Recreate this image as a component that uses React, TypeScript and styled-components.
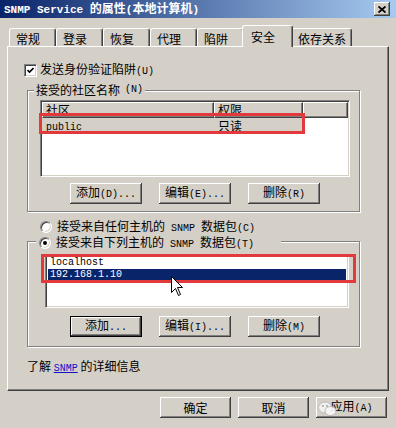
import React from "react";
import styled, { createGlobalStyle } from "styled-components";

const GlobalStyle = createGlobalStyle`
  html, body { margin: 0; padding: 0; background: #d4d0c8; }
  body {
    font-family: "Noto Sans CJK SC", "Liberation Sans", sans-serif;
    font-size: 12px;
    color: #000;
  }
  * { box-sizing: border-box; }
`;

const Window = styled.div`
  position: relative;
  width: 396px;
  height: 428px;
  background: #d4d0c8;
  display: flex;
  flex-direction: column;
  overflow: hidden;
`;

const TitleBar = styled.div`
  height: 18px;
  flex: none;
  display: flex;
  align-items: center;
  justify-content: space-between;
  padding: 0 6px 0 4px;
  background: linear-gradient(to right, #0a246a, #a6caf0);
  color: #fff;
`;

const TitleText = styled.div`
  font-weight: bold;
  font-size: 12px;
  line-height: 18px;
  white-space: nowrap;
`;

const TitleLatin = styled.span`
  font-family: "Liberation Mono", monospace;
  font-size: 11px;
  font-weight: bold;
`;

const CloseButton = styled.div`
  width: 16px;
  height: 14px;
  background: #d4d0c8;
  box-shadow: inset -1px -1px #404040, inset 1px 1px #fff, inset -2px -2px #808080;
  display: flex;
  align-items: center;
  justify-content: center;
`;

const Body = styled.div`
  flex: 1;
  display: flex;
  flex-direction: column;
  padding: 7px 7px 0 7px;
`;

const TabStrip = styled.div`
  position: relative;
  z-index: 1;
  height: 22px;
  margin-bottom: -1px;
  padding-left: 2px;
  display: flex;
  align-items: flex-end;
`;

const Tab = styled.div<{ $active?: boolean }>`
  position: relative;
  z-index: ${(p) => (p.$active ? 2 : 1)};
  min-width: ${(p) => (p.$active ? 51 : 47)}px;
  height: ${(p) => (p.$active ? 22 : 18)}px;
  margin: 0 ${(p) => (p.$active ? -2 : 0)}px ${(p) => (p.$active ? 0 : 1)}px;
  padding: ${(p) => (p.$active ? "1px 7px 0 8px" : "3px 5px 0 6px")};
  display: flex;
  align-items: center;
  background: #d4d0c8;
  border: 1px solid;
  border-color: #fff #404040 transparent #fff;
  border-bottom: none;
  border-radius: 3px 3px 0 0;
  box-shadow: inset -1px 0 #808080;
  line-height: 14px;
  white-space: nowrap;
`;

const Panel = styled.div`
  height: 345px;
  flex: none;
  display: flex;
  flex-direction: column;
  align-items: flex-start;
  border: 1px solid;
  border-color: #fff #404040 #404040 #fff;
  box-shadow: inset -1px -1px #808080;
`;

const Latin = styled.span`
  font-family: "Liberation Mono", monospace;
  font-size: 10px;
`;

const mixed = (s: string) =>
  s
    .split(/([\x20-\x7E]+)/)
    .filter(Boolean)
    .map((part, i) =>
      /^[\x20-\x7E]+$/.test(part) ? (
        <Latin key={i}>{part}</Latin>
      ) : (
        <React.Fragment key={i}>{part}</React.Fragment>
      )
    );

const CheckRow = styled.label`
  display: flex;
  align-items: center;
  gap: 3px;
  height: 13px;
  margin: 17px 0 0 16px;
  line-height: 14px;
  white-space: nowrap;
`;

const CheckBox = styled.span`
  width: 13px;
  height: 13px;
  flex: none;
  background: #fff;
  border: 1px solid;
  border-color: #808080 #fff #fff #808080;
  box-shadow: inset 1px 1px #404040, inset -1px -1px #d4d0c8;
  display: flex;
  align-items: center;
  justify-content: center;
`;

const GroupBox = styled.div<{ $top: number; $width: number; $height: number }>`
  width: ${(p) => p.$width}px;
  height: ${(p) => p.$height}px;
  margin: ${(p) => p.$top}px 0 0 19px;
  display: flex;
  flex-direction: column;
  align-items: flex-start;
  border: 1px solid #808080;
  box-shadow: 1px 1px 0 #fff, inset 1px 1px 0 #fff;
`;

const GroupLabel = styled.div<{ $width?: number; $rise: number }>`
  margin: -${(p) => p.$rise}px 0 0 ${(p) => (p.$width ? 8 : 6)}px;
  padding: 0 ${(p) => (p.$width ? 0 : 2)}px 0 ${(p) => (p.$width ? 3 : 2)}px;
  width: ${(p) => (p.$width ? `${p.$width}px` : "auto")};
  height: 14px;
  line-height: 14px;
  background: #d4d0c8;
  display: flex;
  align-items: center;
  gap: 5px;
  white-space: nowrap;
`;

const Sunken = styled.div<{ $left: number; $top: number; $width: number; $height: number }>`
  position: relative;
  margin: ${(p) => p.$top}px 0 0 ${(p) => p.$left}px;
  width: ${(p) => p.$width}px;
  height: ${(p) => p.$height}px;
  background: #fff;
  border: 1px solid;
  border-color: #808080 #fff #fff #808080;
  padding: 1px;
  box-shadow: inset 1px 1px #404040, inset -1px -1px #d4d0c8;
  display: flex;
  flex-direction: column;
`;

const HeaderRow = styled.div`
  display: flex;
  height: 16px;
  flex: none;
`;

const HeaderCell = styled.div<{ $width?: number }>`
  ${(p) => (p.$width ? `width: ${p.$width}px;` : "flex: 1;")}
  height: 16px;
  padding-left: 3px;
  line-height: 14px;
  background: #d4d0c8;
  border: 1px solid;
  border-color: #fff #404040 #404040 #fff;
  box-shadow: inset -1px -1px #808080;
`;

const DataRow = styled.div`
  display: flex;
  width: 261px;
  height: 15px;
  background: #d4d0c8;
  align-items: center;
`;

const DataCell = styled.div<{ $width: number }>`
  width: ${(p) => p.$width}px;
  padding-left: 4px;
  line-height: 15px;
  white-space: nowrap;
`;

const ListItem = styled.div<{ $selected?: boolean }>`
  height: 12px;
  margin: 0 1px;
  padding-left: 2px;
  line-height: 12px;
  color: ${(p) => (p.$selected ? "#fff" : "#000")};
  background: ${(p) => (p.$selected ? "#0a246a" : "transparent")};
  font-family: "Liberation Mono", monospace;
  font-size: 10px;
`;

const RedMark = styled.div<{ $left: number; $top: number; $width: number; $height: number }>`
  position: absolute;
  left: ${(p) => p.$left}px;
  top: ${(p) => p.$top}px;
  width: ${(p) => p.$width}px;
  height: ${(p) => p.$height}px;
  border: 3px solid #e2393c;
  pointer-events: none;
`;

const ButtonRow = styled.div<{ $top: number }>`
  display: flex;
  gap: 17px;
  margin: ${(p) => p.$top}px 0 0 42px;
`;

const Button = styled.button<{ $focused?: boolean; $width?: number }>`
  width: ${(p) => p.$width ?? 72}px;
  height: 21px;
  padding: 0;
  font-family: inherit;
  font-size: 12px;
  line-height: 14px;
  color: #000;
  background: #d4d0c8;
  border: ${(p) => (p.$focused ? "1px solid #000" : "none")};
  box-shadow: inset -1px -1px #404040, inset 1px 1px #fff, inset -2px -2px #808080;
  white-space: nowrap;
`;

const RadioRow = styled.div`
  display: flex;
  align-items: center;
  gap: 5px;
  height: 14px;
  margin: 8px 0 0 32px;
  line-height: 14px;
  white-space: nowrap;
`;

const Radio = styled.span<{ $checked?: boolean }>`
  position: relative;
  width: 12px;
  height: 12px;
  flex: none;
  border-radius: 50%;
  background: #fff;
  border: 1px solid;
  border-color: #808080 #fff #fff #808080;
  box-shadow: inset 1px 1px #404040, inset -1px -1px #d4d0c8;
  &::after {
    content: "";
    display: ${(p) => (p.$checked ? "block" : "none")};
    position: absolute;
    left: 3px;
    top: 3px;
    width: 4px;
    height: 4px;
    border-radius: 50%;
    background: #000;
  }
`;

const InfoText = styled.div`
  margin: 12px 0 0 19px;
  line-height: 14px;
  white-space: nowrap;
`;

const Link = styled.span`
  color: #1010c8;
  text-decoration: underline;
  font-family: "Liberation Mono", monospace;
  font-size: 10px;
`;

const DialogButtons = styled.div`
  display: flex;
  justify-content: flex-end;
  gap: 7px;
  margin-top: 6px;
  padding-right: 2px;
`;

const Cursor = styled.svg`
  position: absolute;
  left: 171px;
  top: 276px;
`;

const Watermark = styled.svg`
  position: absolute;
  left: 318px;
  top: 401px;
  opacity: 0.9;
`;

const tabs = ["常规", "登录", "恢复", "代理", "陷阱", "安全", "依存关系"];

export default function App() {
  return (
    <>
      <GlobalStyle />
      <Window>
        <TitleBar>
          <TitleText>
            <TitleLatin>SNMP Service </TitleLatin>的属性<TitleLatin>(</TitleLatin>本地计算机
            <TitleLatin>)</TitleLatin>
          </TitleText>
          <CloseButton>
            <svg width="8" height="7" viewBox="0 0 8 7">
              <path d="M0.5 0.5 L7.5 6.5 M7.5 0.5 L0.5 6.5" stroke="#000" strokeWidth="1.8" />
            </svg>
          </CloseButton>
        </TitleBar>
        <Body>
          <TabStrip>
            {tabs.map((t) => (
              <Tab key={t} $active={t === "安全"}>
                {t}
              </Tab>
            ))}
          </TabStrip>
          <Panel>
            <CheckRow>
              <CheckBox>
                <svg width="7" height="7" viewBox="0 0 7 7">
                  <path d="M0.5 3 L2.5 5 L6.5 1" stroke="#000" strokeWidth="1.6" fill="none" />
                </svg>
              </CheckBox>
              <span>{mixed("发送身份验证陷阱(U)")}</span>
            </CheckRow>

            <GroupBox $top={13} $width={333} $height={122}>
              <GroupLabel $rise={8}>{mixed("接受的社区名称(N)")}</GroupLabel>
              <Sunken $left={12} $top={3} $width={310} $height={77}>
                <HeaderRow>
                  <HeaderCell $width={172}>社区</HeaderCell>
                  <HeaderCell $width={89}>权限</HeaderCell>
                  <HeaderCell />
                </HeaderRow>
                <DataRow>
                  <DataCell $width={172}>
                    <Latin>public</Latin>
                  </DataCell>
                  <DataCell $width={89}>只读</DataCell>
                </DataRow>
                <RedMark $left={-2} $top={12} $width={266} $height={21} />
              </Sunken>
              <ButtonRow $top={6}>
                <Button>{mixed("添加(D)...")}</Button>
                <Button>{mixed("编辑(E)...")}</Button>
                <Button>{mixed("删除(R)")}</Button>
              </ButtonRow>
            </GroupBox>

            <RadioRow>
              <Radio />
              <span>{mixed("接受来自任何主机的 SNMP 数据包(C)")}</span>
            </RadioRow>

            <GroupBox $top={7} $width={333} $height={106}>
              <GroupLabel $width={245} $rise={6}>
                <Radio $checked />
                <span>{mixed("接受来自下列主机的 SNMP 数据包(T)")}</span>
              </GroupLabel>
              <Sunken $left={17} $top={5} $width={304} $height={53}>
                <ListItem>localhost</ListItem>
                <ListItem $selected>192.168.1.10</ListItem>
                <RedMark $left={-5} $top={-2} $width={315} $height={29} />
              </Sunken>
              <ButtonRow $top={8}>
                <Button $focused>{mixed("添加...")}</Button>
                <Button>{mixed("编辑(I)...")}</Button>
                <Button>{mixed("删除(M)")}</Button>
              </ButtonRow>
            </GroupBox>

            <InfoText>
              了解 <Link>SNMP</Link> 的详细信息
            </InfoText>
          </Panel>
          <DialogButtons>
            <Button $width={71}>确定</Button>
            <Button $width={71}>取消</Button>
            <Button $width={71}>{mixed("应用(A)")}</Button>
          </DialogButtons>
        </Body>
        <Cursor width="13" height="21" viewBox="0 0 13 21">
          <path
            d="M0.5 0.5 L0.5 16.5 L4.5 12.5 L7.5 19.5 L9.5 18.5 L6.5 11.5 L11.5 11.5 Z"
            fill="#fff"
            stroke="#000"
            strokeWidth="1"
          />
        </Cursor>
        <Watermark width="19" height="16" viewBox="0 0 19 16">
          <ellipse cx="7" cy="6.5" rx="6.5" ry="5.5" fill="#f4f4f4" stroke="#b8b8b8" />
          <ellipse cx="12.5" cy="10" rx="5.5" ry="4.5" fill="#fafafa" stroke="#b8b8b8" />
          <circle cx="5" cy="5" r="0.9" fill="#9a9a9a" />
          <circle cx="9" cy="5" r="0.9" fill="#9a9a9a" />
        </Watermark>
      </Window>
    </>
  );
}
